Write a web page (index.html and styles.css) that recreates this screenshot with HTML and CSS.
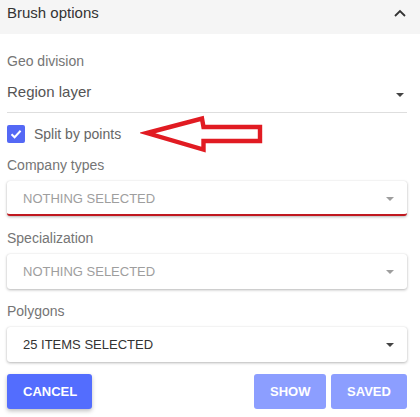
FILE: index.html
```html
<!DOCTYPE html>
<html>
<head>
<meta charset="utf-8">
<link rel="stylesheet" href="styles.css">
</head>
<body>
<div class="header">
  <span class="title">Brush options</span>
  <svg class="chev" width="12" height="8" viewBox="0 0 12 8"><path d="M1 7 L6 2 L11 7" fill="none" stroke="#333" stroke-width="1.8"/></svg>
</div>
<div class="content">
  <div class="label geo">Geo division</div>
  <div class="region">
    <span>Region layer</span>
    <span class="caret dark"></span>
  </div>
  <div class="check-row">
    <span class="checkbox">
      <svg width="18" height="18" viewBox="0 0 18 18"><path d="M4.5 9.2 L7.6 12.2 L13.6 5.8" fill="none" stroke="#fff" stroke-width="2"/></svg>
    </span>
    <span class="check-label">Split by points</span>
  </div>
  <div class="label first">Company types</div>
  <div class="select invalid">
    <span class="placeholder">NOTHING SELECTED</span>
    <span class="caret light"></span>
  </div>
  <div class="label">Specialization</div>
  <div class="select">
    <span class="placeholder">NOTHING SELECTED</span>
    <span class="caret light"></span>
  </div>
  <div class="label">Polygons</div>
  <div class="select">
    <span class="value">25 ITEMS SELECTED</span>
    <span class="caret dark"></span>
  </div>
  <div class="actions">
    <button class="btn primary">CANCEL</button>
    <button class="btn muted push">SHOW</button>
    <button class="btn muted">SAVED</button>
  </div>
</div>
<svg class="arrow" width="130" height="50" viewBox="0 0 130 50">
  <polygon points="7,23 62,8.5 63.5,17 120,17 120,31 63.5,31 63.5,39.5" fill="none" stroke="#e11b22" stroke-width="4.4" stroke-linejoin="miter"/>
</svg>
</body>
</html>
```
FILE: styles.css
```css
html, body {
  margin: 0;
  padding: 0;
  background: #fff;
}
body {
  font-family: "Liberation Sans", Arial, sans-serif;
  position: relative;
  width: 420px;
  height: 417px;
  overflow: hidden;
}
.header {
  box-sizing: border-box;
  height: 34px;
  background: #f5f5f5;
  padding: 4px 13px 0 7px;
  display: flex;
  align-items: flex-start;
  justify-content: space-between;
}
.title {
  font-size: 15px;
  line-height: 18px;
  color: #333;
}
.chev {
  margin-top: 5px;
  margin-right: 1px;
}
.content {
  padding: 0 13px 0 7px;
}
.label {
  font-size: 14px;
  line-height: 16px;
  color: #757575;
  margin-top: 14px;
}
.label.geo {
  margin-top: 19px;
}
.label.first {
  margin-top: 14px;
}
.region {
  margin-top: 14px;
  font-size: 15px;
  line-height: 18px;
  color: #555;
  padding-bottom: 11px;
  border-bottom: 1px solid #dedede;
  display: flex;
  align-items: center;
  justify-content: space-between;
  padding-right: 3px;
}
.region .caret {
  margin-top: 5px;
}
.caret {
  width: 0;
  height: 0;
  border-left: 4px solid transparent;
  border-right: 4px solid transparent;
  border-top: 4px solid #555;
}
.caret.dark {
  border-top-color: #444;
}
.caret.light {
  border-top-color: #9e9e9e;
}
.check-row {
  margin-top: 12px;
  height: 18px;
  display: flex;
  align-items: center;
}
.checkbox {
  width: 18px;
  height: 18px;
  border-radius: 2px;
  background: #5468f5;
  display: block;
}
.checkbox svg {
  display: block;
}
.check-label {
  margin-left: 9px;
  font-size: 14px;
  line-height: 16px;
  color: #666;
}
.select {
  box-sizing: border-box;
  margin-top: 8px;
  height: 35px;
  border-radius: 3px;
  background: #fff;
  box-shadow: 0 1px 3px rgba(0, 0, 0, 0.28), 0 0 1px rgba(0, 0, 0, 0.12);
  display: flex;
  align-items: center;
  justify-content: space-between;
  padding: 0 13px 0 16px;
  font-size: 13px;
}
.select.invalid {
  border-bottom: 2px solid #c0181f;
  padding-top: 2px;
}
.placeholder {
  color: #9e9e9e;
}
.value {
  color: #333;
}
.actions {
  margin-top: 12px;
  display: flex;
  gap: 5px;
}
.btn {
  box-sizing: border-box;
  height: 35px;
  border: none;
  border-radius: 3px;
  padding: 0 16px;
  font-family: "Liberation Sans", Arial, sans-serif;
  font-size: 13px;
  font-weight: bold;
  color: #fff;
}
.btn.primary {
  background: #536dfe;
  padding: 0 16px;
  width: 85px;
  box-shadow: 0 2px 4px rgba(0, 0, 0, 0.25);
}
.btn.muted {
  background: #8c9eff;
}
.btn.push {
  margin-left: auto;
  width: 72px;
}
.btn.muted:last-child {
  width: 76px;
}
.arrow {
  position: absolute;
  left: 140px;
  top: 110px;
}
```
